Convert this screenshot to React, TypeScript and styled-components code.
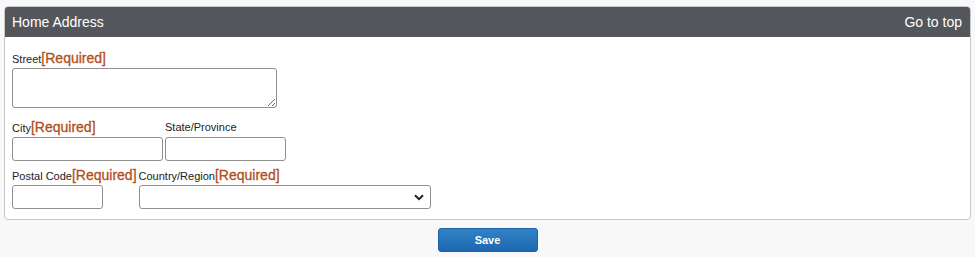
import styled, { createGlobalStyle } from 'styled-components';

const GlobalStyle = createGlobalStyle`
  html, body {
    margin: 0;
    padding: 0;
    background: #f8f8f8;
    font-family: "Liberation Sans", Arial, sans-serif;
  }
`;

const Page = styled.div`
  padding: 6px 4px 0 4px;
  width: 967px;
`;

const Panel = styled.section`
  background: #ffffff;
  border: 1px solid #c8c8c8;
  border-radius: 4px;
  overflow: hidden;
`;

const PanelHeader = styled.div`
  display: flex;
  justify-content: space-between;
  align-items: center;
  height: 31px;
  margin: -1px -1px 0 -1px;
  padding: 0 9px 0 8px;
  background: #53575b;
  color: #ffffff;
  font-size: 14px;
  border-radius: 4px 4px 0 0;
`;

const TopLink = styled.a`
  color: #ffffff;
  text-decoration: none;
  cursor: pointer;
`;

const PanelBody = styled.div`
  padding: 13px 7px 10px 7px;
`;

const Row = styled.div<{ $gap?: number }>`
  display: flex;
  gap: 2px;
  margin-top: ${(p) => p.$gap ?? 0}px;
`;

const Field = styled.div`
  display: flex;
  flex-direction: column;
`;

const Label = styled.label`
  display: block;
  height: 16px;
  line-height: 16px;
  margin-bottom: 2px;
  font-size: 11px;
  color: #222;
  white-space: nowrap;
`;

const Required = styled.span`
  font-size: 14px;
  font-weight: normal;
  color: #b14f1b;
  -webkit-text-stroke: 0.3px #b14f1b;
`;

const TextArea = styled.textarea`
  box-sizing: border-box;
  width: 265px;
  height: 40px;
  border: 1px solid #8f8f8f;
  border-radius: 3px;
  margin: 0;
  font-family: inherit;
`;

const Input = styled.input<{ $w: number }>`
  box-sizing: border-box;
  width: ${(p) => p.$w}px;
  height: 24px;
  border: 1px solid #8f8f8f;
  border-radius: 3px;
  margin: 0;
  font-family: inherit;
`;

const Select = styled.select`
  box-sizing: border-box;
  width: 292px;
  height: 24px;
  border: 1px solid #8f8f8f;
  border-radius: 3px;
  margin: 0;
  appearance: none;
  background: #fff url("data:image/svg+xml,%3Csvg xmlns='http://www.w3.org/2000/svg' width='10' height='7' viewBox='0 0 10 7'%3E%3Cpath d='M1 1.2l4 4 4-4' fill='none' stroke='%23222' stroke-width='2'/%3E%3C/svg%3E") no-repeat right 6px center;
`;

const Footer = styled.div`
  display: flex;
  justify-content: center;
  margin-top: 8px;
`;

const SaveButton = styled.button`
  width: 100px;
  height: 24px;
  border: 1px solid #1b62a6;
  border-radius: 3px;
  background: linear-gradient(#3282c8, #1d68ae);
  color: #fff;
  font-family: inherit;
  font-size: 11px;
  font-weight: bold;
  cursor: pointer;
`;

export default function App() {
  return (
    <>
      <GlobalStyle />
      <Page>
        <Panel>
          <PanelHeader>
            <span>Home Address</span>
            <TopLink>Go to top</TopLink>
          </PanelHeader>
          <PanelBody>
            <Row>
              <Field>
                <Label>
                  Street<Required>[Required]</Required>
                </Label>
                <TextArea />
              </Field>
            </Row>
            <Row $gap={11}>
              <Field>
                <Label>
                  City<Required>[Required]</Required>
                </Label>
                <Input $w={151} />
              </Field>
              <Field>
                <Label>State/Province</Label>
                <Input $w={121} />
              </Field>
            </Row>
            <Row $gap={6}>
              <Field>
                <Label>
                  Postal Code<Required>[Required]</Required>
                </Label>
                <Input $w={91} />
              </Field>
              <Field>
                <Label>
                  Country/Region<Required>[Required]</Required>
                </Label>
                <Select>
                  <option value="" />
                </Select>
              </Field>
            </Row>
          </PanelBody>
        </Panel>
        <Footer>
          <SaveButton>Save</SaveButton>
        </Footer>
      </Page>
    </>
  );
}
